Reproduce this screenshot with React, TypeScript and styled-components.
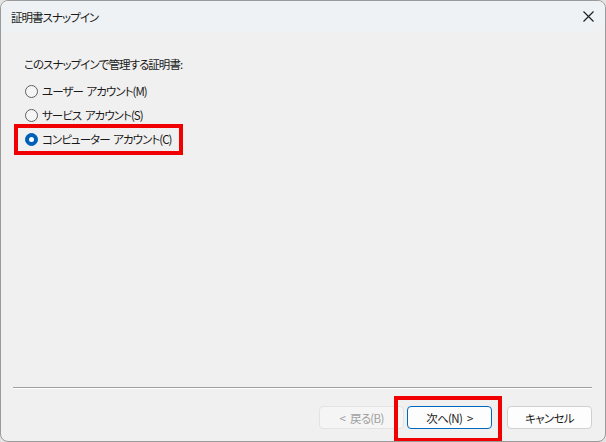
import React, { useState } from "react";
import styled, { createGlobalStyle, css } from "styled-components";

const Global = createGlobalStyle`
  html, body { margin: 0; padding: 0; background: #e4e4e4; }
  body { font-family: "Noto Sans CJK JP", "Noto Sans", sans-serif; font-feature-settings: "palt"; }
  * { box-sizing: border-box; }
`;

const Window = styled.div`
  width: 606px;
  height: 442px;
  border: 1px solid #9a9a9a;
  border-radius: 8px;
  overflow: hidden;
  display: flex;
  flex-direction: column;
  background: #f0f0f0;
  color: #1a1a1a;
  font-size: 11.5px;
  letter-spacing: -0.95px;
  word-spacing: 2px;
`;

const TitleBar = styled.div`
  height: 30px;
  flex: none;
  display: flex;
  align-items: center;
  justify-content: space-between;
  padding: 0 10px 0 10px;
  background: #eef2f4;
`;

const Title = styled.span`
  line-height: 16px;
  margin-top: 1px;
`;

const CloseButton = styled.button`
  width: 14px;
  height: 14px;
  padding: 0;
  border: none;
  background: transparent;
  display: flex;
  align-items: center;
  justify-content: center;
  margin-top: 1px;
`;

const Body = styled.div`
  flex: 1;
  display: flex;
  flex-direction: column;
`;

const Content = styled.div`
  flex: 1;
  padding: 25px 0 0 23px;
`;

const Prompt = styled.div`
  line-height: 16px;
`;

const RadioList = styled.div`
  margin-top: 7px;
  display: flex;
  flex-direction: column;
`;

const RadioRow = styled.label<{ $highlight?: boolean }>`
  position: relative;
  display: flex;
  align-items: center;
  height: 24px;
  gap: 4px;
  padding-left: 1px;
  align-self: flex-start;
  cursor: default;
  ${(p) =>
    p.$highlight &&
    css`
      &::after {
        content: "";
        position: absolute;
        left: -10px;
        right: -11px;
        top: -3px;
        bottom: -4px;
        border: 4px solid #f00000;
        pointer-events: none;
      }
    `}
`;

const RadioCircle = styled.span<{ $checked: boolean }>`
  width: 13px;
  height: 13px;
  border-radius: 50%;
  flex: none;
  display: flex;
  align-items: center;
  justify-content: center;
  ${(p) =>
    p.$checked
      ? css`
          background: #005fb8;
          border: 1px solid #005fb8;
          &::before {
            content: "";
            width: 5px;
            height: 5px;
            border-radius: 50%;
            background: #ffffff;
          }
        `
      : css`
          background: #f5f5f5;
          border: 1px solid #5f5f5f;
        `}
`;

const RadioText = styled.span`
  line-height: 16px;
  white-space: pre;
`;

const Footer = styled.div`
  flex: none;
  padding: 0 12px 12px 12px;
`;

const Separator = styled.div`
  height: 2px;
  border-top: 1px solid #a0a0a0;
  border-bottom: 1px solid #ffffff;
  margin-right: 1px;
`;

const ButtonRow = styled.div`
  margin-top: 17px;
  display: flex;
  justify-content: flex-end;
  padding-right: 1px;
`;

const Highlight = styled.div`
  position: relative;
  display: flex;
  &::after {
    content: "";
    position: absolute;
    left: -10px;
    right: -10px;
    top: -10px;
    bottom: -13px;
    border: 4px solid #f00000;
    pointer-events: none;
  }
`;

const Button = styled.button<{ $variant?: "default" | "primary" | "disabled"; $gap?: number }>`
  width: 85px;
  height: 23px;
  padding: 0;
  margin-left: ${(p) => p.$gap ?? 0}px;
  border-radius: 4px;
  font-family: inherit;
  font-size: 11.5px;
  letter-spacing: -0.7px;
  word-spacing: 3px;
  font-feature-settings: "palt";
  line-height: 16px;
  background: #fdfdfd;
  border: 1px solid #d0d0d0;
  color: #1a1a1a;
  ${(p) =>
    p.$variant === "primary" &&
    css`
      border-color: #0067c0;
    `}
  ${(p) =>
    p.$variant === "disabled" &&
    css`
      background: #f5f5f5;
      border-color: #e3e3e3;
      color: #a0a0a0;
    `}
`;

const options = [
  { key: "user", label: "ユーザー アカウント(M)" },
  { key: "service", label: "サービス アカウント(S)" },
  { key: "computer", label: "コンピューター アカウント(C)" },
];

export default function App() {
  const [selected, setSelected] = useState("computer");
  return (
    <>
      <Global />
      <Window>
        <TitleBar>
          <Title>証明書スナップイン</Title>
          <CloseButton aria-label="閉じる">
            <svg width="11" height="11" viewBox="0 0 11 11">
              <path d="M0.5 0.5 L10.5 10.5 M10.5 0.5 L0.5 10.5" stroke="#1a1a1a" strokeWidth="1.1" fill="none" />
            </svg>
          </CloseButton>
        </TitleBar>
        <Body>
          <Content>
            <Prompt>このスナップインで管理する証明書:</Prompt>
            <RadioList>
              {options.map((o) => (
                <RadioRow
                  key={o.key}
                  $highlight={o.key === "computer"}
                  onClick={() => setSelected(o.key)}
                >
                  <RadioCircle $checked={selected === o.key} />
                  <RadioText>{o.label}</RadioText>
                </RadioRow>
              ))}
            </RadioList>
          </Content>
          <Footer>
            <Separator />
            <ButtonRow>
              <Button $variant="disabled" disabled>
                &lt; 戻る(B)
              </Button>
              <Highlight>
                <Button $variant="primary" $gap={3}>
                  次へ(N) &gt;
                </Button>
              </Highlight>
              <Button $gap={15}>キャンセル</Button>
            </ButtonRow>
          </Footer>
        </Body>
      </Window>
    </>
  );
}
